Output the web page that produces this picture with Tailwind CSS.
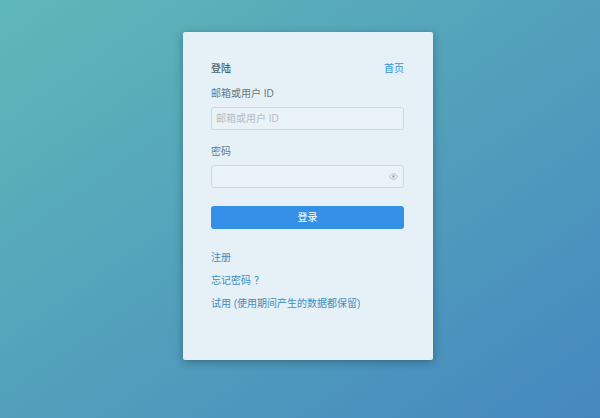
<!DOCTYPE html>
<html lang="zh-CN">
<head>
  <meta charset="UTF-8">
  <meta name="viewport" content="width=device-width, initial-scale=1.0">
  <title>登陆</title>
  <script src="https://cdn.jsdelivr.net/npm/@tailwindcss/browser@4"></script>
</head>
<body>
  <div class="h-[418px] w-[600px] overflow-hidden flex justify-center pt-8 pl-4 bg-linear-[145deg] from-[#5fb8b8] to-[#4588bf] font-['Liberation_Sans','Noto_Sans_CJK_SC',sans-serif]">

    <!-- card -->
    <div class="w-[250px] h-[328px] bg-[#e6f1f7] rounded-[2px] shadow-[0_2px_8px_rgba(0,0,0,0.3)] pt-[29px] pl-[28px] pr-[29px]">
      <div class="flex justify-between items-center h-4 text-[10px] leading-4">
        <span class="font-medium text-[#4a646f]">登陆</span>
        <a class="text-[#3490e0]">首页</a>
      </div>

      <form>
        <label class="block mt-[9px] h-4 text-[10px] leading-4 text-[#67797f]">邮箱或用户 ID</label>
        <input type="text" placeholder="邮箱或用户 ID" class="block mt-[5px] w-full h-[23px] px-[4px] text-[10px] bg-[#e9f2f7] border border-[#c9d9e0] rounded-[3px] placeholder-[#b4c0c6]">

        <label class="block mt-[14px] h-4 text-[10px] leading-4 text-[#67797f]">密码</label>
        <div class="relative mt-[5px]">
          <input type="password" class="block w-full h-[23px] px-[4px] text-[10px] bg-[#e9f2f7] border border-[#c9d9e0] rounded-[3px]">
          <svg class="absolute right-[6px] top-[8px] w-[9px] h-[7px]" viewBox="0 0 18 14" fill="none">
            <path d="M1 7c2-3.500 5-5.500 8-5.500s6 2 8 5.500c-2 3.500-5 5.500-8 5.500S3 10.500 1 7z" stroke="#a6b5bb" stroke-width="1.600"/>
            <circle cx="9" cy="7" r="2.800" fill="#a6b5bb"/>
          </svg>
        </div>

        <button type="button" class="block mt-[18px] w-full h-[23px] bg-[#3490e6] rounded-[3px] text-white text-[10px] leading-[24px]">登录</button>
      </form>

      <div class="mt-[21px] flex flex-col gap-[7px] text-[10px] leading-4 text-[#3f8cc4]">
        <a>注册</a>
        <a>忘记密码<span class="ml-[3px]">？</span></a>
        <a>试用 (使用期间产生的数据都保留)</a>
      </div>
    </div>

  </div>
</body>
</html>
